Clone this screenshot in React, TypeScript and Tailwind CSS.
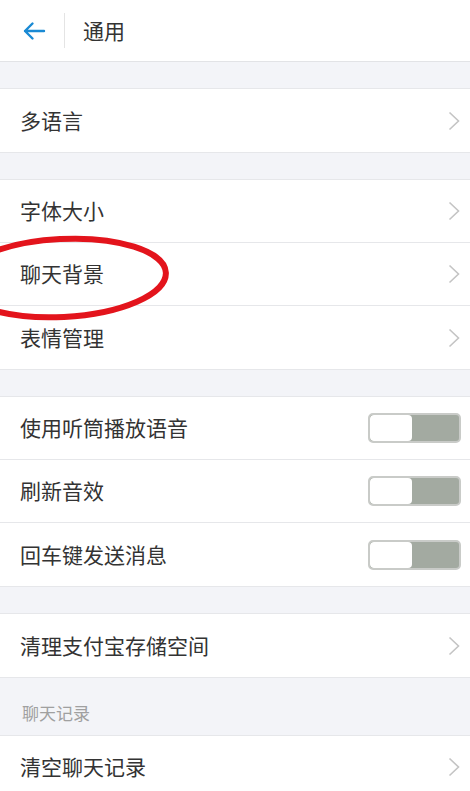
import React from "react";

const font = { fontFamily: '"Noto Sans CJK SC", "Noto Sans", sans-serif' };

function Chevron() {
  return (
    <svg width="12" height="20" viewBox="0 0 12 20" className="shrink-0">
      <path d="M1.5 1.5 L10.5 10 L1.5 18.5" fill="none" stroke="#c4c4c4" strokeWidth="1.6" />
    </svg>
  );
}

function Toggle() {
  return (
    <div className="flex h-[30px] w-[93px] overflow-hidden rounded-[5px] border-2 border-[#c9cbc8] bg-[#a3aaa1]">
      <div className="h-full w-[42px] rounded-[4px] bg-white" />
    </div>
  );
}

function Row({ label, toggle, last }: { label: string; toggle?: boolean; last?: boolean }) {
  return (
    <div
      className={`flex h-[63px] items-center justify-between bg-white pl-5 ${toggle ? "pr-[9px]" : "pr-[10px]"} ${
        last ? "" : "border-b border-[#e6e7ea]"
      }`}
    >
      <span className="text-[21px] text-[#333333]">{label}</span>
      {toggle ? <Toggle /> : <Chevron />}
    </div>
  );
}

function Gap() {
  return <div className="h-[27px] border-b border-[#e6e7ea] bg-[#f3f4f8]" />;
}

export default function App() {
  return (
    <div className="relative h-[791px] w-[470px] overflow-hidden bg-[#f3f4f8]" style={font}>
      <div className="flex h-[62px] items-center border-b border-[#e2e3e6] bg-white">
        <div className="flex w-[64px] justify-center pl-1">
          <svg width="24" height="20" viewBox="0 0 24 20">
            <path d="M22 10 H3 M10.5 2.5 L3 10 L10.5 17.5" fill="none" stroke="#1a8ad4" strokeWidth="2.4" strokeLinecap="round" strokeLinejoin="round" />
          </svg>
        </div>
        <div className="h-[35px] w-px bg-[#e4e4e4]" />
        <span className="pl-[18px] text-[21px] text-[#333333]">通用</span>
      </div>
      <Gap />
      <Row label="多语言" last />
      <div className="border-t border-[#e6e7ea]" />
      <Gap />
      <Row label="字体大小" />
      <Row label="聊天背景" />
      <Row label="表情管理" last />
      <div className="border-t border-[#e6e7ea]" />
      <Gap />
      <Row label="使用听筒播放语音" toggle />
      <Row label="刷新音效" toggle />
      <Row label="回车键发送消息" toggle last />
      <div className="border-t border-[#e6e7ea]" />
      <Gap />
      <Row label="清理支付宝存储空间" last />
      <div className="flex h-[58px] items-end border-t border-[#e6e7ea] bg-[#f3f4f8] pb-[10px] pl-[22px]">
        <span className="text-[17px] text-[#a0a0a0]">聊天记录</span>
      </div>
      <div className="border-t border-[#e6e7ea]" />
      <Row label="清空聊天记录" />

      <svg className="pointer-events-none absolute left-0 top-0" width="470" height="791" viewBox="0 0 470 791">
        <ellipse cx="62" cy="278" rx="104" ry="39" transform="rotate(-3 62 278)" fill="none" stroke="#e3141c" strokeWidth="6" />
      </svg>
    </div>
  );
}
